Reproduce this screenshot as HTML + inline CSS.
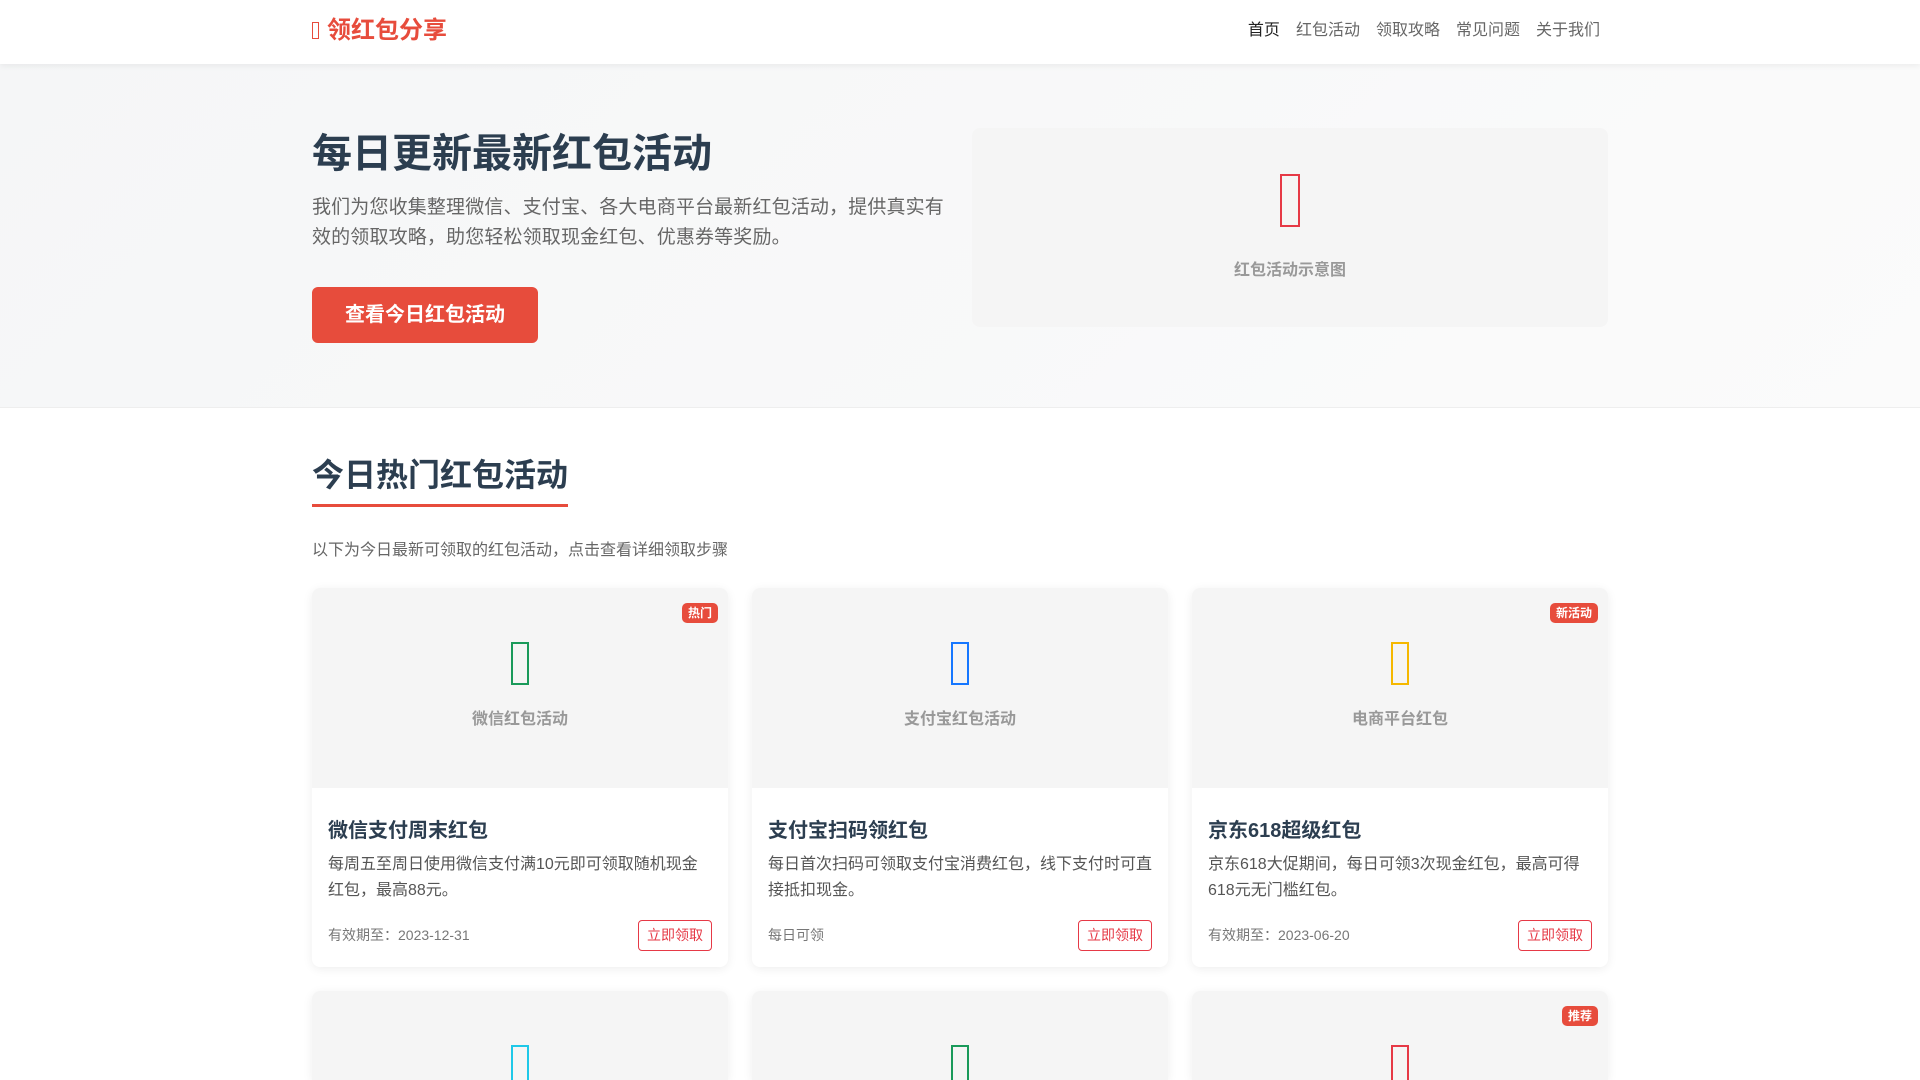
<!DOCTYPE html>
<html><head><meta charset="utf-8"><style>
*{margin:0;padding:0;box-sizing:border-box}
html,body{width:1920px;height:1080px;overflow:hidden}
body{background:#fff;font-family:"Liberation Sans","Noto Sans CJK SC",sans-serif;color:#333}
#w{position:relative;width:1920px;height:1080px;overflow:hidden}
.hdr{position:absolute;left:0;top:0;width:1920px;height:64px;background:#fff;box-shadow:0 2px 6px rgba(0,0,0,.06);z-index:2}
.logo{position:absolute;left:312px;top:15px;font-size:24px;font-weight:bold;color:#e74c3c;line-height:32px}
.logo i{display:inline-block;width:7px;height:17px;border:1.5px solid #e74c3c;margin-right:8px;vertical-align:-1px}
.nav{position:absolute;right:320px;top:20px;font-size:16px;line-height:22px;color:#666}
.nav span{margin-left:16px}.nav span:first-child{color:#222}
.hero{position:absolute;left:0;top:64px;width:1920px;height:344px;background:linear-gradient(135deg,#f5f6f7,#fbfbfb);border-bottom:1px solid #eee}
.h1{position:absolute;left:312px;font-size:40px;font-weight:bold;color:#2c3e50;line-height:56px}
.hp{position:absolute;left:312px;width:660px;font-size:19px;letter-spacing:0.15px;line-height:30px;color:#666;white-space:nowrap}
.btn{position:absolute;left:312px;width:226px;height:56px;background:#e74c3c;color:#fff;border-radius:6px;font-size:20px;font-weight:bold;text-align:center;line-height:56px}
.himg{position:absolute;left:972px;width:636px;height:199px;background:#f5f5f5;border-radius:8px}
.tofu{position:absolute;border:2px solid}
.lbl{position:absolute;left:0;width:100%;text-align:center;font-size:16px;font-weight:bold;color:#999}
.st{position:absolute;left:312px;top:452px;font-size:32px;font-weight:bold;color:#2c3e50;line-height:46px}
.ul{position:absolute;left:312px;top:504px;width:256px;height:3px;background:#e74c3c}
.sub{position:absolute;left:312px;top:540px;font-size:16px;color:#666;line-height:22px}
.card{position:absolute;width:416px;height:379px;background:#fff;border-radius:8px;box-shadow:0 2px 10px rgba(0,0,0,.07);overflow:hidden}
.card.r2{height:89px;border-radius:8px 8px 0 0}
.ci{position:absolute;left:0;top:0;width:416px;height:200px;background:#f5f5f5}
.badge{position:absolute;right:10px;top:15px;height:20px;padding:0 6px;background:#e74c3c;color:#fff;font-size:12px;font-weight:bold;line-height:20px;border-radius:5px}
.ct{position:absolute;left:16px;top:229px;font-size:20px;font-weight:bold;color:#2c3e50;line-height:28px}
.cd{position:absolute;left:16px;top:264px;width:385px;font-size:16px;line-height:26px;color:#555}
.cf{position:absolute;left:16px;top:337px;font-size:14px;color:#777;line-height:20px}
.cb{position:absolute;right:16px;top:332px;width:74px;height:31px;border:1px solid #e63946;border-radius:4px;color:#e63946;font-size:14px;text-align:center;line-height:29px}
</style></head><body><div id="w">
<div class="hdr"><div class="logo"><i></i>领红包分享</div>
<div class="nav"><span>首页</span><span>红包活动</span><span>领取攻略</span><span>常见问题</span><span>关于我们</span></div></div>
<div class="hero">
<div class="h1" style="top:62px">每日更新最新红包活动</div>
<div class="hp" style="top:129px">我们为您收集整理微信、支付宝、各大电商平台最新红包活动，提供真实有<br>效的领取攻略，助您轻松领取现金红包、优惠券等奖励。</div>
<div class="btn" style="top:223px">查看今日红包活动</div>
<div class="himg" style="top:64px"><div class="tofu" style="left:308px;top:46px;width:20px;height:53px;border-color:#e63946"></div><div class="lbl" style="top:128px">红包活动示意图</div></div>
</div>
<div class="st">今日热门红包活动</div><div class="ul"></div>
<div class="sub">以下为今日最新可领取的红包活动，点击查看详细领取步骤</div>

<div class="card" style="left:312px;top:588px"><div class="ci"><div class="badge">热门</div><div class="tofu" style="left:199px;top:54px;width:18px;height:43px;border-color:#1a9a5a"></div><div class="lbl" style="top:117px">微信红包活动</div></div>
<div class="ct">微信支付周末红包</div><div class="cd">每周五至周日使用微信支付满10元即可领取随机现金红包，最高88元。</div><div class="cf">有效期至：2023-12-31</div><div class="cb">立即领取</div></div>

<div class="card" style="left:752px;top:588px"><div class="ci"><div class="tofu" style="left:199px;top:54px;width:18px;height:43px;border-color:#1677ff"></div><div class="lbl" style="top:117px">支付宝红包活动</div></div>
<div class="ct">支付宝扫码领红包</div><div class="cd">每日首次扫码可领取支付宝消费红包，线下支付时可直接抵扣现金。</div><div class="cf">每日可领</div><div class="cb">立即领取</div></div>

<div class="card" style="left:1192px;top:588px"><div class="ci"><div class="badge">新活动</div><div class="tofu" style="left:199px;top:54px;width:18px;height:43px;border-color:#f5b800"></div><div class="lbl" style="top:117px">电商平台红包</div></div>
<div class="ct">京东618超级红包</div><div class="cd">京东618大促期间，每日可领3次现金红包，最高可得618元无门槛红包。</div><div class="cf">有效期至：2023-06-20</div><div class="cb">立即领取</div></div>

<div class="card r2" style="left:312px;top:991px"><div class="ci"><div class="tofu" style="left:199px;top:54px;width:18px;height:43px;border-color:#1ec8e8"></div></div></div>
<div class="card r2" style="left:752px;top:991px"><div class="ci"><div class="tofu" style="left:199px;top:54px;width:18px;height:43px;border-color:#1a9a5a"></div></div></div>
<div class="card r2" style="left:1192px;top:991px"><div class="ci"><div class="badge">推荐</div><div class="tofu" style="left:199px;top:54px;width:18px;height:43px;border-color:#e63946"></div></div></div>
</div></body></html>
